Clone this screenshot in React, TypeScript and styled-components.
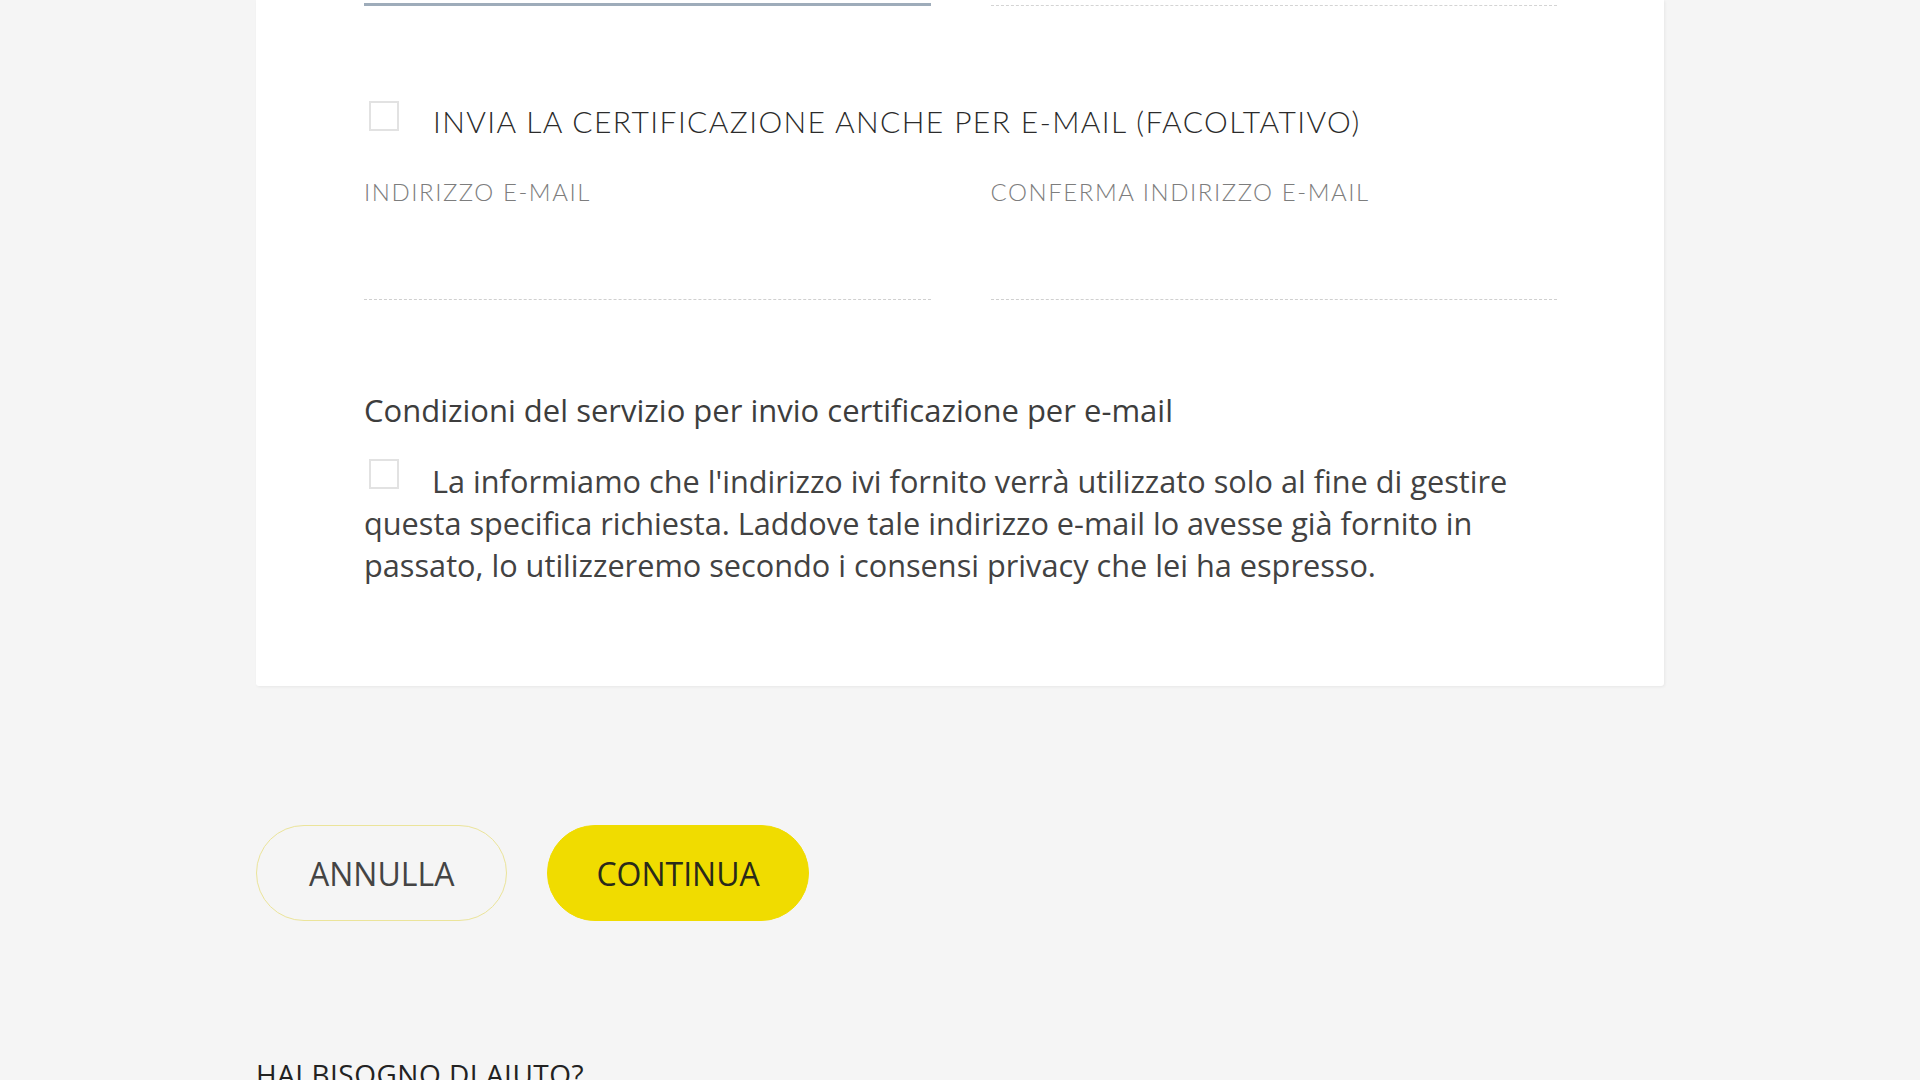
import React from 'react';
import styled, { createGlobalStyle } from 'styled-components';

const GlobalStyle = createGlobalStyle`
  html, body {
    margin: 0;
    padding: 0;
    background: #f5f5f5;
  }
  body {
    font-family: "Open Sans", "Liberation Sans", sans-serif;
    color: #333;
  }
`

const Page = styled.main`
  width: 1408px;
  margin: 0 auto;
  padding-bottom: 40px;
`

const Card = styled.section`
  background: #fff;
  border-radius: 0 0 3px 3px;
  box-shadow: 1px 1px 3px rgba(0, 0, 0, 0.06);
  padding: 0 107px 100px 108px;
`

const FieldRow = styled.div`
  display: grid;
  grid-template-columns: 1fr 1fr;
  column-gap: 60px;
`

const TopLine = styled.div<{ $active?: boolean }>`
  height: ${({ $active }) => ($active ? '3px' : '5px')};
  border-bottom: ${({ $active }) => ($active ? '3px solid #9eacba' : '1px dashed #d4d4d4')};
`

const CheckRow = styled.label`
  display: flex;
  align-items: flex-start;
  gap: 34px;
  margin-top: 95px;
  padding-left: 5px;
  cursor: pointer;
`

const Box = styled.span<{ $inline?: boolean }>`
  display: inline-block;
  box-sizing: border-box;
  width: 30px;
  height: 30px;
  border: 2px solid #e2e2e2;
  background: #fff;
  flex-shrink: 0;
  margin-top: 0;
  ${({ $inline }) => $inline && `
    vertical-align: top;
    margin: -1px 33px 0 5px;
  `}
`

const CheckTitle = styled.span`
  font-family: Lato, "Liberation Sans", sans-serif;
  font-weight: 300;
  font-size: 30px;
  letter-spacing: 1.4px;
  line-height: 40px;
  color: #2b2b2b;
`

const Fields = styled(FieldRow)`
  margin-top: 36px;
`

const Field = styled.div`
  display: flex;
  flex-direction: column;
`

const Label = styled.span`
  font-family: Lato, "Liberation Sans", sans-serif;
  font-weight: 300;
  font-size: 24px;
  letter-spacing: 1.55px;
  line-height: 30px;
  color: #7d7d7d;
`

const Input = styled.input`
  box-sizing: border-box;
  height: 93px;
  border: none;
  border-bottom: 1px dashed #d0d0d0;
  background: transparent;
  outline: none;
  font: inherit;
`

const Terms = styled.h3`
  margin: 89px 0 0;
  font-weight: 400;
  font-size: 31px;
  line-height: 42px;
  color: #3d3d3d;
`

const Notice = styled.p`
  margin: 29px 0 0;
  font-size: 30.7px;
  line-height: 42px;
  color: #424242;
`

const Actions = styled.div`
  display: flex;
  gap: 40px;
  margin-top: 139px;
`

const Button = styled.button<{ $primary?: boolean }>`
  box-sizing: border-box;
  height: 96px;
  padding: 0 ${({ $primary }) => ($primary ? '48px' : '52px')};
  border-radius: 48px;
  border: 1.5px solid ${({ $primary }) => ($primary ? '#f0dc00' : '#ebe49a')};
  background: ${({ $primary }) => ($primary ? '#f0dc00' : 'transparent')};
  color: ${({ $primary }) => ($primary ? '#2a2a1a' : '#444')};
  font-family: "Open Sans", "Liberation Sans", sans-serif;
  font-size: 32px;
  cursor: pointer;
`

const Help = styled.h4`
  margin: 138px 0 0;
  font-family: "Open Sans", "Liberation Sans", sans-serif;
  font-weight: 400;
  font-size: 28px;
  letter-spacing: 0.5px;
  line-height: 30px;
  color: #222;
`

const App = () => {
    return (<>
        <GlobalStyle/>
        <Page>
            <Card>
                <FieldRow>
                    <TopLine $active/>
                    <TopLine/>
                </FieldRow>
                <CheckRow>
                    <Box/>
                    <CheckTitle>INVIA LA CERTIFICAZIONE ANCHE PER E-MAIL (FACOLTATIVO)</CheckTitle>
                </CheckRow>
                <Fields>
                    <Field>
                        <Label>INDIRIZZO E-MAIL</Label>
                        <Input type="email"/>
                    </Field>
                    <Field>
                        <Label>CONFERMA INDIRIZZO E-MAIL</Label>
                        <Input type="email"/>
                    </Field>
                </Fields>
                <Terms>Condizioni del servizio per invio certificazione per e-mail</Terms>
                <Notice>
                    <Box $inline/>
                    La informiamo che l'indirizzo ivi fornito verrà utilizzato solo al fine di gestire questa specifica richiesta. Laddove tale indirizzo e-mail lo avesse già fornito in passato, lo utilizzeremo secondo i consensi privacy che lei ha espresso.
                </Notice>
            </Card>
            <Actions>
                <Button>ANNULLA</Button>
                <Button $primary>CONTINUA</Button>
            </Actions>
            <Help>HAI BISOGNO DI AIUTO?</Help>
        </Page>
    </>);
}

export default App;
